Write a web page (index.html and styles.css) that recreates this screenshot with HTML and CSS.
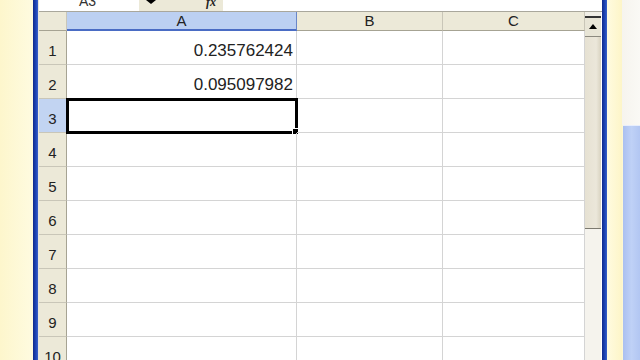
FILE: index.html
```html
<!DOCTYPE html>
<html>
<head>
<meta charset="utf-8">
<link rel="stylesheet" href="styles.css">
</head>
<body>
<div class="screen">
  <div class="pane-yellow left"></div>
  <div class="edge"></div>
  <div class="sheet">
    <div class="formula">
      <div class="namebox"><span class="ref">A3</span></div>
      <div class="tools">
        <span class="drop"></span>
        <span class="fx">fx</span>
      </div>
      <div class="input"></div>
    </div>
    <div class="body">
      <div class="grid">
        <div class="corner"></div>
        <div class="colhead sel">A</div>
        <div class="colhead">B</div>
        <div class="colhead">C</div>

        <div class="rowhead">1</div><div class="cell num">0.235762424</div><div class="cell"></div><div class="cell"></div>
        <div class="rowhead">2</div><div class="cell num">0.095097982</div><div class="cell"></div><div class="cell"></div>
        <div class="rowhead sel">3</div><div class="cell active"></div><div class="cell"></div><div class="cell"></div>
        <div class="rowhead">4</div><div class="cell"></div><div class="cell"></div><div class="cell"></div>
        <div class="rowhead">5</div><div class="cell"></div><div class="cell"></div><div class="cell"></div>
        <div class="rowhead">6</div><div class="cell"></div><div class="cell"></div><div class="cell"></div>
        <div class="rowhead">7</div><div class="cell"></div><div class="cell"></div><div class="cell"></div>
        <div class="rowhead">8</div><div class="cell"></div><div class="cell"></div><div class="cell"></div>
        <div class="rowhead">9</div><div class="cell"></div><div class="cell"></div><div class="cell"></div>
        <div class="rowhead">10</div><div class="cell"></div><div class="cell"></div><div class="cell"></div>
      </div>
      <div class="vscroll">
        <div class="sb-top"></div>
        <div class="sb-btn"><span class="up"></span></div>
        <div class="sb-thumb"></div>
        <div class="sb-track"></div>
      </div>
    </div>
  </div>
  <div class="edge"></div>
  <div class="pane-yellow right"></div>
  <div class="outer">
    <div class="outer-top"></div>
    <div class="outer-thumb"></div>
  </div>
</div>
</body>
</html>
```

FILE: styles.css
```css
html, body {
  margin: 0;
  padding: 0;
  width: 640px;
  height: 360px;
  overflow: hidden;
  background: #fdf8d2;
  font-family: "Liberation Sans", Arial, sans-serif;
}
.screen {
  display: flex;
  width: 640px;
  height: 360px;
}
.pane-yellow {
  background: linear-gradient(90deg, #fdf6cc, #fefbe0);
  height: 100%;
}
.pane-yellow.left { width: 33px; flex-shrink: 0; }
.pane-yellow.right { width: 15px; flex-shrink: 0; background: linear-gradient(90deg, #fffbe0, #fdf5c8); }
.edge {
  width: 5px;
  flex-shrink: 0;
  height: 100%;
  background: linear-gradient(90deg, #0f2a8c, #1e46b8 60%, #3b62c8);
}
.sheet {
  width: 563px;
  flex-shrink: 0;
  display: flex;
  flex-direction: column;
  background: #fff;
  border-left: 1px solid #e6e4dc;
  overflow: hidden;
}
.formula {
  height: 11px;
  flex-shrink: 0;
  display: flex;
  border-bottom: 1px solid #a9a79c;
  background: #fff;
  overflow: hidden;
}
.namebox {
  width: 100px;
  position: relative;
  overflow: hidden;
}
.ref {
  position: absolute;
  left: 40px;
  top: -6px;
  font-size: 14px;
  line-height: 14px;
  color: #333;
}
.tools {
  width: 84px;
  background: #ece9d8;
  position: relative;
}
.drop {
  position: absolute;
  left: 7px;
  top: 0;
  width: 0;
  height: 0;
  border-left: 5px solid transparent;
  border-right: 5px solid transparent;
  border-top: 4px solid #000;
}
.fx {
  position: absolute;
  left: 67px;
  top: -4px;
  font-family: "Liberation Serif", serif;
  font-style: italic;
  font-weight: bold;
  font-size: 12px;
  line-height: 12px;
  color: #222;
}
.input { flex: 1; }
.body {
  display: flex;
  flex: 1;
  min-height: 0;
}
.grid {
  display: grid;
  grid-template-columns: 28px 230px 146px 142px;
  grid-template-rows: 19px;
  grid-auto-rows: 34px;
  width: 546px;
  flex-shrink: 0;
}
.corner {
  background: #ece9d8;
  border-right: 1px solid #c9c6b8;
  border-bottom: 1px solid #a6a393;
}
.colhead {
  background: #ece9d8;
  border-right: 1px solid #c9c6b8;
  border-bottom: 1px solid #a6a393;
  text-align: center;
  font-size: 15px;
  line-height: 18px;
  color: #222;
}
.colhead.sel {
  background: #bcd0f2;
  border-bottom: 2px solid #4a6cc4;
  border-right: 1px solid #6a86c8;
  line-height: 17px;
}
.rowhead {
  background: #ece9d8;
  border-right: 1px solid #a6a393;
  border-bottom: 1px solid #c9c6b8;
  text-align: center;
  font-size: 15px;
  line-height: 39px;
  color: #222;
}
.rowhead.sel {
  background: #c2d4f2;
  border-right: 1px solid #6a86c8;
}
.cell {
  border-right: 1px solid #d4d4d4;
  border-bottom: 1px solid #d4d4d4;
  font-size: 17px;
  line-height: 39px;
  color: #222;
  position: relative;
}
.cell.num {
  text-align: right;
  padding-right: 3px;
}
.cell.active {
  outline: 3px solid #000;
  outline-offset: -2px;
}
.cell.active::after {
  content: "";
  position: absolute;
  right: -3px;
  bottom: -3px;
  width: 5px;
  height: 5px;
  background: #000;
  border: 1px solid #fff;
}
.vscroll {
  width: 16px;
  flex-shrink: 0;
  display: flex;
  flex-direction: column;
  background: #f4f2ec;
}
.sb-top {
  height: 4px;
  background: #f0eee6;
  border-bottom: 2px solid #333;
}
.sb-btn {
  height: 18px;
  background: #e8e5d6;
  border-bottom: 1px solid #8c8a80;
  position: relative;
}
.up {
  position: absolute;
  left: 4px;
  top: 6px;
  width: 0;
  height: 0;
  border-left: 4px solid transparent;
  border-right: 4px solid transparent;
  border-bottom: 5px solid #000;
}
.sb-thumb {
  height: 191px;
  background: linear-gradient(90deg, #e6e1d2, #ebe7da 70%, #d8d2c0);
  border-bottom: 1px solid #7c7a70;
}
.sb-track {
  flex: 1;
  background: #f5f3ed;
}
.outer {
  flex: 1;
  display: flex;
  flex-direction: column;
}
.outer-top {
  height: 125px;
  background: linear-gradient(90deg, #f6f4ee, #faf9f5);
}
.outer-thumb {
  flex: 1;
  margin-left: 1px;
  background: linear-gradient(90deg, #aac0f0, #bfd1f6 50%, #b2c6f2);
  border-top: 1px solid #e8eefc;
}
```
